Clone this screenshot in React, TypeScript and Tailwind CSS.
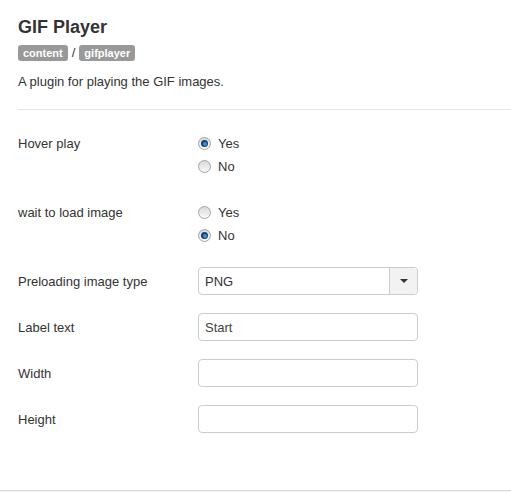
const font = { fontFamily: '"Liberation Sans", Arial, sans-serif' };

function Radio({ checked, label }: { checked?: boolean; label: string }) {
  return (
    <label className="flex items-center h-[23px] text-[13px] text-[#333]">
      <span className="w-[13px] h-[13px] rounded-full border border-[#a3a3a3] bg-gradient-to-b from-[#d8d8d8] to-[#fafafa] flex items-center justify-center">
        {checked && (
          <span className="w-[7px] h-[7px] rounded-full bg-[#15406a] flex items-center justify-center">
            <span className="w-[4px] h-[4px] rounded-full bg-[#3d8fd6]" />
          </span>
        )}
      </span>
      <span className="ml-[7px]">{label}</span>
    </label>
  );
}

function Row({ label, children, className }: { label: string; children: React.ReactNode; className?: string }) {
  return (
    <div className={'flex items-center ' + (className ?? '')}>
      <div className="w-[180px] text-[13px] leading-[20px] pt-[1px] text-[#333]">{label}</div>
      {children}
    </div>
  );
}

function RadioRow({ label, value }: { label: string; value: 'yes' | 'no' }) {
  return (
    <div className="flex items-start">
      <div className="w-[180px] h-[23px] leading-[23px] text-[13px] text-[#333]">{label}</div>
      <div className="flex flex-col">
        <Radio label="Yes" checked={value === 'yes'} />
        <Radio label="No" checked={value === 'no'} />
      </div>
    </div>
  );
}

function TextInput({ value }: { value?: string }) {
  return (
    <div className="w-[220px] h-[28px] border border-[#cccccc] rounded-[4px] bg-white px-[6px] pt-[1px] flex items-center text-[13px] text-[#444]">
      {value}
    </div>
  );
}

export default function App() {
  return (
    <div className="w-[511px] h-[492px] bg-white flex flex-col" style={font}>
      <div className="flex-1 pl-[18px]">
        <h2 className="mt-[16px] text-[18px] leading-[22px] font-bold text-[#333]">GIF Player</h2>
        <div className="mt-[7px] flex items-center h-[16px] text-[11px] leading-[16px]">
          <span className="bg-[#999999] text-white font-bold rounded-[3px] px-[5px]">content</span>
          <span className="mx-[4px] text-[13px] text-[#333]">/</span>
          <span className="bg-[#999999] text-white font-bold rounded-[3px] px-[5px]">gifplayer</span>
        </div>
        <p className="mt-[12px] text-[13px] leading-[18px] text-[#333]">A plugin for playing the GIF images.</p>
        <div className="mt-[18px] border-t border-[#e5e5e5]" />

        <div className="mt-[22px] flex flex-col">
          <RadioRow label="Hover play" value="yes" />
          <div className="mt-[23px]">
            <RadioRow label="wait to load image" value="no" />
          </div>
          <Row label="Preloading image type" className="mt-[20px]">
            <div className="w-[220px] h-[28px] border border-[#cccccc] rounded-[4px] bg-white flex text-[13px] text-[#333]">
              <div className="flex-1 flex items-center px-[6px] pt-[1px]">PNG</div>
              <div className="w-[28px] border-l border-[#cccccc] bg-[#f2f2f2] rounded-r-[4px] flex items-center justify-center">
                <span className="w-0 h-0 border-l-[4px] border-r-[4px] border-t-[4px] border-l-transparent border-r-transparent border-t-[#333]" />
              </div>
            </div>
          </Row>
          <Row label="Label text" className="mt-[18px]">
            <TextInput value="Start" />
          </Row>
          <Row label="Width" className="mt-[18px]">
            <TextInput />
          </Row>
          <Row label="Height" className="mt-[18px]">
            <TextInput />
          </Row>
        </div>
      </div>
      <div className="h-[2px] border-t border-[#dddddd] bg-[#f3f3f3]" />
    </div>
  );
}
